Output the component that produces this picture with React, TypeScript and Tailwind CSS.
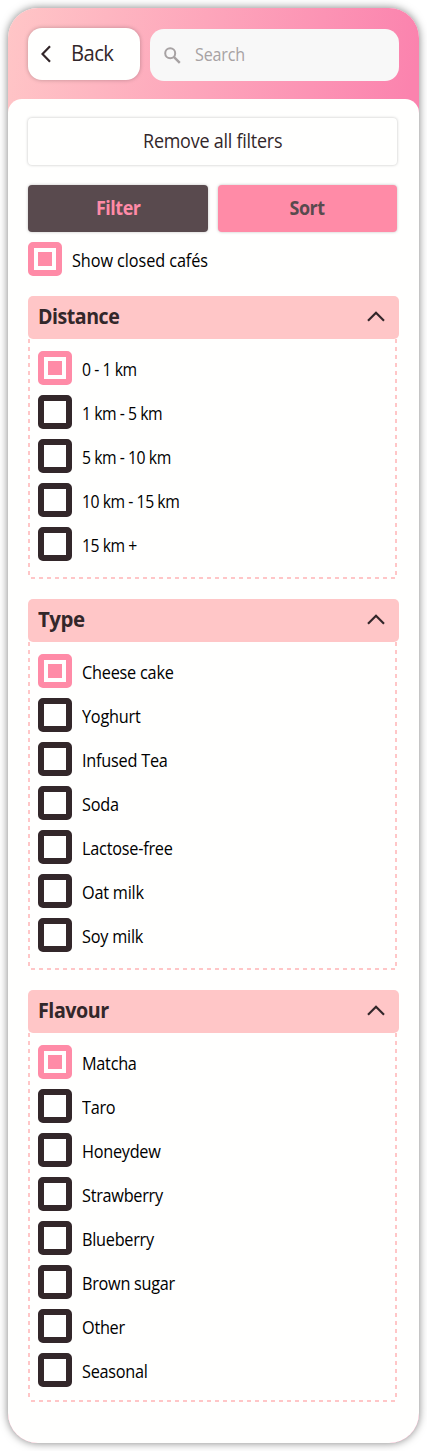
const sections = [
  {
    title: 'Distance',
    height: 'h-[240px]',
    titleScale: 'scale-x-[0.91]',
    options: ['0 - 1 km', '1 km - 5 km', '5 km - 10 km', '10 km - 15 km', '15 km +'],
    optionStyle: 'scale-x-[0.9] tracking-[-0.5px]',
  },
  {
    title: 'Type',
    height: 'h-[328px]',
    titleScale: 'scale-x-[0.95]',
    options: ['Cheese cake', 'Yoghurt', 'Infused Tea', 'Soda', 'Lactose-free', 'Oat milk', 'Soy milk'],
    optionStyle: 'scale-x-[0.93] tracking-[-0.25px]',
  },
  {
    title: 'Flavour',
    height: 'h-[369px]',
    titleScale: 'scale-x-[0.915]',
    options: ['Matcha', 'Taro', 'Honeydew', 'Strawberry', 'Blueberry', 'Brown sugar', 'Other', 'Seasonal'],
    optionStyle: 'scale-x-[0.93] tracking-[-0.3px]',
  },
];

const dashedFrame =
  'bg-[repeating-linear-gradient(180deg,#ffc6c7_0_4px,transparent_4px_8px),repeating-linear-gradient(180deg,#ffc6c7_0_4px,transparent_4px_8px),repeating-linear-gradient(90deg,#ffc6c7_0_4px,transparent_4px_8px)] [background-position:left_top,right_top,3px_bottom] [background-size:2px_calc(100%-3px),2px_calc(100%-3px),calc(100%-5px)_2px] bg-no-repeat';

function CheckRow({ label, checked, textStyle }: { label: string; checked?: boolean; textStyle: string }) {
  return (
    <label className="flex h-[34px] items-center gap-[10px]">
      <span
        className={
          checked
            ? 'flex size-[34px] shrink-0 items-center justify-center rounded-[5px] border-[6px] border-[#ff8ba7] bg-white'
            : 'flex size-[34px] shrink-0 rounded-[5px] border-[6px] border-[#33272a] bg-white'
        }
      >
        {checked && <span className="size-[14px] bg-[#ff8ba7]" />}
      </span>
      <span className={`origin-left whitespace-nowrap pt-px text-[17.5px] leading-6 text-black ${textStyle}`}>{label}</span>
    </label>
  );
}

export default function App() {
  return (
    <div className="h-[1451px] bg-white pl-2 pt-2 font-['Open_Sans','Noto_Sans',sans-serif]">
      <main className="h-[1435px] w-[411px] overflow-hidden rounded-[30px] bg-[linear-gradient(100deg,#ffc6c7_0px,#fb83ae_411px)] shadow-[0_0_8px_rgba(0,0,0,0.5)]">
        <header className="flex h-[91px] gap-[10px] pl-5 pt-5">
          <button className="flex h-[52px] w-[112px] items-center rounded-[14px] bg-[#fffffe] pl-[13px] text-[#33272a] shadow-[0_0_4px_rgba(0,0,0,0.25)]">
            <svg width="10" height="18" viewBox="0 0 10 18" fill="none" stroke="currentColor" strokeWidth="2.2">
              <path d="M9 1.2 1.5 9 9 16.8" />
            </svg>
            <span className="ml-5 origin-left scale-x-[0.92] pb-1 text-[22px] leading-7 tracking-[-0.6px]">Back</span>
          </button>
          <div className="mt-px flex h-[52px] w-[249px] items-center rounded-[14px] bg-[#f8f8f8] pl-[14px] text-[#a7a2a3]">
            <svg width="17" height="17" viewBox="0 0 17 17" fill="none" stroke="currentColor" strokeWidth="2">
              <circle cx="6.2" cy="6.2" r="5" />
              <path d="m9.8 9.8 6 6" strokeWidth="2.4" />
            </svg>
            <span className="ml-[14px] origin-left scale-x-[0.92] pb-[3px] text-[17.5px] leading-6 tracking-[-0.2px]">Search</span>
          </div>
        </header>
        <div className="h-[1344px] rounded-t-[14px] bg-[#fffffe] pl-5 pt-[19px]">
          <button className="flex h-[47px] w-[369px] items-center justify-center rounded-[4px] bg-[#fffffe] pb-[2px] text-[#33272a] shadow-[0_0_3px_rgba(0,0,0,0.25)]">
            <span className="scale-x-[0.92] text-[19.5px] tracking-[-0.25px]">Remove all filters</span>
          </button>
          <div className="mt-5 flex gap-[10px] text-[19.5px] font-bold tracking-[-0.5px]">
            <button className="flex h-[47px] w-[180px] items-center justify-center rounded-[4px] bg-[#594a4e] pb-[2px] text-[#ff8ba7] shadow-[0_0_3px_rgba(0,0,0,0.25)]">
              <span className="scale-x-[0.92]">Filter</span>
            </button>
            <button className="flex h-[47px] w-[179px] items-center justify-center rounded-[4px] bg-[#ff8ba7] pb-[2px] text-[#594a4e] shadow-[0_0_3px_rgba(0,0,0,0.25)]">
              <span className="scale-x-[0.92]">Sort</span>
            </button>
          </div>
          <div className="mb-5 mt-[10px]">
            <CheckRow label="Show closed cafés" checked textStyle="scale-x-[0.93] tracking-[-0.1px]" />
          </div>
          <div className="flex flex-col gap-5">
            {sections.map((section) => (
              <section key={section.title}>
                <h2 className="flex h-[43px] w-[371px] items-center justify-between rounded-[5px] bg-[#ffc6c7] pl-[10px] pr-[14px] text-[21.5px] font-bold tracking-[-0.5px] text-[#33272a]">
                  <span className={`origin-left pb-[3px] ${section.titleScale}`}>{section.title}</span>
                  <svg className="mb-[2px]" width="18" height="11" viewBox="0 0 18 11" fill="none" stroke="currentColor" strokeWidth="2.2">
                    <path d="m1 9.7 8-8 8 8" />
                  </svg>
                </h2>
                <div className={`${section.height} ${dashedFrame} flex w-[369px] flex-col gap-[10px] pl-[10px] pt-3`}>
                  {section.options.map((option, i) => (
                    <CheckRow key={option} label={option} checked={i === 0} textStyle={section.optionStyle} />
                  ))}
                </div>
              </section>
            ))}
          </div>
        </div>
      </main>
    </div>
  );
}
